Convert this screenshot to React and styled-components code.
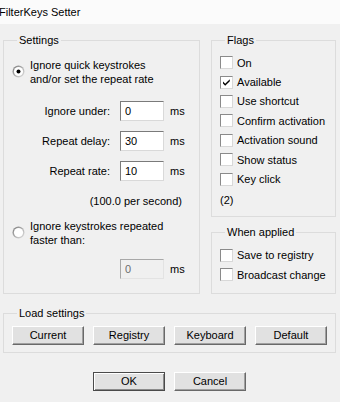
import React from "react";
import styled, { createGlobalStyle } from "styled-components";

const GlobalStyle = createGlobalStyle`
  html, body {
    margin: 0;
    padding: 0;
    background: #f0f0f0;
  }
  body {
    font-family: "Liberation Sans", Arial, sans-serif;
    font-size: 11px;
    color: #000;
  }
`;

function RadioDot({ checked }) {
  return (
    <RadioIcon width="13" height="13" viewBox="0 0 13 13">
      <defs>
        <linearGradient id="rg" x1="0" y1="0" x2="1" y2="1">
          <stop offset="0" stopColor="#7a7a7a" />
          <stop offset="1" stopColor="#e4e4e4" />
        </linearGradient>
      </defs>
      <circle cx="6.5" cy="6.5" r="6" fill="url(#rg)" />
      <circle cx="6.5" cy="6.5" r="4.6" fill="#fff" />
      {checked && <circle cx="6.5" cy="6.5" r="2" fill="#000" />}
    </RadioIcon>
  );
}

function Check({ checked, label }) {
  return (
    <CheckRow>
      <Box>
        {checked && (
          <svg width="11" height="11" viewBox="0 0 11 11">
            <path d="M2 4.5 L4.2 6.8 L8.8 2.2 L8.8 4.2 L4.2 8.8 L2 6.5 Z" fill="#000" />
          </svg>
        )}
      </Box>
      <span>{label}</span>
    </CheckRow>
  );
}

function Field({ label, value, disabled }) {
  return (
    <FieldRow>
      <FieldLabel>{label}</FieldLabel>
      <Edit value={value} readOnly disabled={disabled} />
      <Unit>ms</Unit>
    </FieldRow>
  );
}

export default function App() {
  return (
    <Window>
      <GlobalStyle />
      <TitleBar>
        <Title>FilterKeys Setter</Title>
      </TitleBar>
      <Body>
        <TopRow>
          <Group $w="197px" $pad="12px 8px 11px 8px">
            <legend>Settings</legend>
            <RadioRow>
              <RadioDot checked />
              <span>
                Ignore quick keystrokes
                <br />
                and/or set the repeat rate
              </span>
            </RadioRow>
            <Fields>
              <Field label="Ignore under:" value="0" />
              <Field label="Repeat delay:" value="30" />
              <Field label="Repeat rate:" value="10" />
            </Fields>
            <Note>(100.0 per second)</Note>
            <RadioRow $top="12px">
              <RadioDot />
              <span>
                Ignore keystrokes repeated
                <br />
                faster than:
              </span>
            </RadioRow>
            <Fields $top="12px">
              <Field label="" value="0" disabled />
            </Fields>
          </Group>
          <Column>
            <Group $pad="6px 8px 9px 8px">
              <legend>Flags</legend>
              <Check label="On" />
              <Check label="Available" checked />
              <Check label="Use shortcut" />
              <Check label="Confirm activation" />
              <Check label="Activation sound" />
              <Check label="Show status" />
              <Check label="Key click" />
              <Count>(2)</Count>
            </Group>
            <Group $grow $pad="7px 8px 8px 8px">
              <legend>When applied</legend>
              <Check label="Save to registry" />
              <Check label="Broadcast change" />
            </Group>
          </Column>
        </TopRow>
        <Group $pad="6px 8px 7px 8px" $top="13px">
          <legend>Load settings</legend>
          <ButtonRow>
            <Button>Current</Button>
            <Button>Registry</Button>
            <Button>Keyboard</Button>
            <Button>Default</Button>
          </ButtonRow>
        </Group>
        <Footer>
          <Button $default>OK</Button>
          <Button>Cancel</Button>
        </Footer>
      </Body>
    </Window>
  );
}

const Window = styled.div`
  width: 340px;
  height: 402px;
  overflow: hidden;
  background: #f0f0f0;
  display: flex;
  flex-direction: column;
`;

const TitleBar = styled.div`
  height: 24px;
  flex: none;
  background: #fbfbfb;
  display: flex;
  align-items: center;
`;

const Title = styled.span`
  margin-left: -1px;
  font-size: 11px;
  color: #000;
`;

const Body = styled.div`
  padding: 10px 4px 0 3px;
  display: flex;
  flex-direction: column;
`;

const TopRow = styled.div`
  display: flex;
  gap: 11px;
  align-items: stretch;
`;

const Column = styled.div`
  width: 125px;
  display: flex;
  flex-direction: column;
  gap: 9px;
`;

const Group = styled.fieldset`
  margin: ${p => p.$top || "0"} 0 0 0;
  padding: ${p => p.$pad};
  border: 1px solid #dcdcdc;
  min-width: 0;
  box-sizing: border-box;
  width: ${p => p.$w || "auto"};
  flex: ${p => (p.$grow ? "1" : "none")};

  legend {
    padding: 0 2px;
    margin-left: 5px;
    line-height: 13px;
  }
`;

const RadioRow = styled.div`
  display: flex;
  align-items: center;
  gap: 5px;
  margin-top: ${p => p.$top || "0"};
  line-height: 13.5px;
`;

const RadioIcon = styled.svg`
  flex: none;
  margin-top: -2px;
`;

const Fields = styled.div`
  display: flex;
  flex-direction: column;
  gap: 10px;
  margin-top: ${p => p.$top || "15px"};
`;

const FieldRow = styled.div`
  display: flex;
  align-items: center;
  height: 20px;
`;

const FieldLabel = styled.span`
  width: 98px;
  margin-right: 10px;
  text-align: right;
`;

const Edit = styled.input`
  width: 44px;
  height: 20px;
  box-sizing: border-box;
  margin: 0;
  padding: 0 0 0 4px;
  font: inherit;
  color: #000;
  background: #fff;
  border: 1px solid;
  border-color: #7a7a7a #d9d9d9 #d9d9d9 #7a7a7a;
  outline: none;

  &:disabled {
    background: #f0f0f0;
    color: #6d6d6d;
    border-color: #a8a8a8 #e3e3e3 #e3e3e3 #a8a8a8;
  }
`;

const Unit = styled.span`
  margin-left: 6px;
`;

const Note = styled.div`
  width: 170px;
  text-align: right;
  margin-top: 13px;
  line-height: 14px;
`;

const CheckRow = styled.div`
  display: flex;
  align-items: center;
  gap: 4px;
  height: 19.4px;
`;

const Box = styled.span`
  width: 13px;
  height: 13px;
  box-sizing: border-box;
  background: #fff;
  border: 1px solid;
  border-color: #8a8a8a #d8d8d8 #d8d8d8 #8a8a8a;
  display: flex;
  align-items: center;
  justify-content: center;
  flex: none;
`;

const Count = styled.div`
  margin-top: 4px;
  line-height: 14px;
`;

const ButtonRow = styled.div`
  display: flex;
  gap: 9px;
`;

const Footer = styled.div`
  display: flex;
  justify-content: center;
  gap: 9px;
  margin-top: 19px;
`;

const Button = styled.button`
  width: 72px;
  height: 19px;
  box-sizing: border-box;
  margin: 0;
  padding: 0;
  font: inherit;
  color: #000;
  background: #e1e1e1;
  border: 1px solid;
  border-color: ${p => (p.$default ? "#4a4a4a" : "#fff #696969 #696969 #fff")};
  box-shadow: ${p =>
    p.$default
      ? "inset 1px 1px #fff, inset -1px -1px #8a8a8a"
      : "inset -1px -1px #a0a0a0"};
`;
